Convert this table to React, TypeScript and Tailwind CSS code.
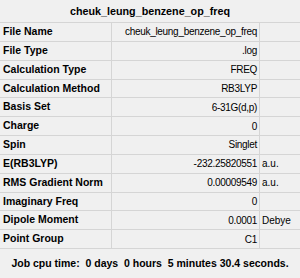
import React from 'react';

const rows: [string, string, string][] = [
  ['File Name', 'cheuk_leung_benzene_op_freq', ''],
  ['File Type', '.log', ''],
  ['Calculation Type', 'FREQ', ''],
  ['Calculation Method', 'RB3LYP', ''],
  ['Basis Set', '6-31G(d,p)', ''],
  ['Charge', '0', ''],
  ['Spin', 'Singlet', ''],
  ['E(RB3LYP)', '-232.25820551', 'a.u.'],
  ['RMS Gradient Norm', '0.00009549', 'a.u.'],
  ['Imaginary Freq', '0', ''],
  ['Dipole Moment', '0.0001', 'Debye'],
  ['Point Group', 'C1', ''],
];

export default function App() {
  return (
    <div className="w-[300px] h-[278px] bg-[#f0f0f0] text-black font-['Liberation_Sans',Arial,sans-serif] flex flex-col">
      {/* Title */}
      <div className="h-[23px] flex items-center justify-center font-bold text-[10.75px] border-b border-[#d5d5d5]">
        cheuk_leung_benzene_op_freq
      </div>

      {/* Summary table */}
      <div className="flex flex-col">
        {rows.map(([label, value, unit]) => (
          <div key={label} className="grid grid-cols-[112px_148px_40px] h-[18.85px] border-b border-[#d5d5d5]">
            <div className="font-bold text-[10.5px] pl-[3px] flex items-center border-r border-[#d5d5d5] whitespace-nowrap">{label}</div>
            <div className="flex items-center justify-end pr-[2px] text-[10px] tracking-[-0.3px] border-r border-[#d5d5d5] whitespace-nowrap">{value}</div>
            <div className="flex items-center pl-[2px] text-[10px] whitespace-nowrap">{unit}</div>
          </div>
        ))}
      </div>

      {/* Footer */}
      <div className="flex-1 flex items-center justify-center font-bold text-[10.5px] whitespace-pre">
        Job cpu time:  0 days  0 hours  5 minutes 30.4 seconds.
      </div>
    </div>
  );
}
